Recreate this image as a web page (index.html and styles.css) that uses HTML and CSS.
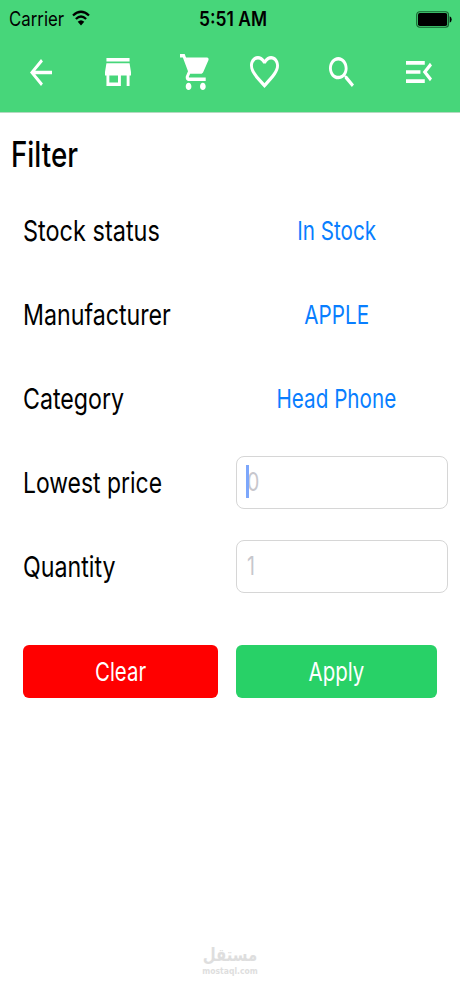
FILE: index.html
```html
<!DOCTYPE html>
<html lang="en">
<head>
<meta charset="utf-8">
<meta name="viewport" content="width=device-width">
<title>Filter</title>
<link rel="stylesheet" href="styles.css">
</head>
<body>
<header class="header">
  <div class="status">
    <div class="carrier"><span class="carrier-name">Carrier</span>
      <svg class="wifi" viewBox="0 0 18 16" preserveAspectRatio="none"><path d="M1 5.5Q9-2.1 17 5.5M3.9 9Q9 4.1 14.1 9" fill="none" stroke="#000" stroke-width="2.3"/><path d="M5.7 11.7Q9 8.6 12.3 11.7L9 15.6z"/></svg>
    </div>
    <span class="time">5:51 AM</span>
    <svg class="battery" viewBox="0 0 36 17"><rect x=".7" y=".7" width="31.8" height="15.6" rx="3" fill="none" stroke="#17602f" stroke-width="1.1"/><rect x="2" y="2" width="29.2" height="13" rx="1.8"/><path d="M33.7 5.3q2 .8 2 3.2t-2 3.2z"/></svg>
  </div>
  <nav class="nav">
    <div class="group group-left">
      <a class="cell"><svg class="i-back" viewBox="4 4 16 16" preserveAspectRatio="none"><path d="M20 11H7.83l5.59-5.59L12 4l-8 8 8 8 1.41-1.41L7.83 13H20v-2z"/></svg></a>
      <a class="cell"><svg class="i-store" viewBox="3 4 18 16" preserveAspectRatio="none"><path d="M20 4H4v2h16V4zm1 10v-2l-1-5H4l-1 5v2h1v6h10v-6h4v6h2v-6h1zm-9 4H6v-4h6v4z"/></svg></a>
      <a class="cell"><svg class="i-cart" viewBox="1 2 21 20" preserveAspectRatio="none"><path d="M7 18c-1.1 0-1.99.9-1.99 2S5.900 22 7 22s2-.9 2-2-.9-2-2-2zM1 2v2h2l3.600 7.590-1.350 2.450c-.16.28-.25.61-.25.96 0 1.100.9 2 2 2h12v-2H7.420c-.14 0-.25-.11-.25-.25l.03-.12.9-1.630h7.450c.75 0 1.410-.41 1.750-1.030l3.580-6.490c.08-.14.12-.31.12-.48 0-.55-.45-1-1-1H5.210l-.94-2H1zm16 16c-1.100 0-1.990.9-1.990 2s.89 2 1.990 2 2-.9 2-2-.9-2-2-2z"/></svg></a>
    </div>
    <div class="group group-right">
      <a class="cell"><svg class="i-heart" viewBox="2 3 20 18.35" preserveAspectRatio="none"><path d="M16.5 3c-1.740 0-3.410.81-4.500 2.090C10.910 3.810 9.240 3 7.500 3 4.420 3 2 5.420 2 8.500c0 3.780 3.400 6.860 8.550 11.540L12 21.350l1.450-1.320C18.600 15.360 22 12.280 22 8.500 22 5.420 19.580 3 16.500 3zm-4.400 15.550l-.1.1-.1-.1C7.140 14.240 4 11.390 4 8.500 4 6.500 5.500 5 7.500 5c1.540 0 3.040.99 3.570 2.360h1.870C13.460 5.990 14.960 5 16.500 5c2 0 3.500 1.500 3.500 3.500 0 2.890-3.140 5.740-7.900 10.050z"/></svg></a>
      <a class="cell"><svg class="i-search" viewBox="3 3 17.49 17.49" preserveAspectRatio="none"><path d="M15.500 14h-.79l-.28-.27C15.410 12.590 16 11.110 16 9.500 16 5.910 13.090 3 9.500 3S3 5.910 3 9.500 5.910 16 9.500 16c1.610 0 3.090-.59 4.230-1.570l.27.28v.79l5 4.990L20.490 19l-4.990-5zm-6 0C7.010 14 5 11.990 5 9.500S7.010 5 9.500 5 14 7.010 14 9.500 11.990 14 9.500 14z"/></svg></a>
      <a class="cell"><svg class="i-menu" viewBox="3 6 18 12" preserveAspectRatio="none"><path d="M3 18h13v-2H3v2zm0-5h10v-2H3v2zm0-7v2h13V6H3zm18 9.590L17.420 12 21 8.410 19.590 7l-5 5 5 5L21 15.590z"/></svg></a>
    </div>
  </nav>
</header>
<main class="main">
  <h1 class="title"><span>Filter</span></h1>
  <div class="row"><span class="label label-wide">Stock status</span><a class="choice"><span>In Stock</span></a></div>
  <div class="row"><span class="label">Manufacturer</span><a class="choice"><span>APPLE</span></a></div>
  <div class="row"><span class="label">Category</span><a class="choice"><span>Head Phone</span></a></div>
  <div class="row"><span class="label label-narrow">Lowest price</span><div class="field"><span>0</span><i class="caret"></i></div></div>
  <div class="row"><span class="label">Quantity</span><div class="field"><span>1</span></div></div>
  <div class="actions"><a class="button clear"><span>Clear</span></a><a class="button apply"><span>Apply</span></a></div>
</main>
<footer class="mark"><div class="mark-name" lang="ar">مستقل</div><div class="mark-site">mostaql.com</div></footer>
</body>
</html>
```
FILE: styles.css
```css
* { box-sizing: border-box; }
body {
  margin: 0;
  width: 460px;
  height: 996px;
  display: flex;
  flex-direction: column;
  background: #fff;
  color: #000;
  font-family: Inter, "Liberation Sans", sans-serif;
  overflow: hidden;
}
svg { display: block; flex: none; }
span { white-space: nowrap; }
.header { height: 113px; background: #47d67a; border-bottom: 1px solid #b5d9c1; }
.status {
  height: 37px;
  padding: 1px 8px 0 9px;
  display: grid;
  grid-template-columns: 1fr auto 1fr;
  align-items: center;
  font-size: 20px;
  line-height: 36px;
}
.carrier { display: flex; align-items: center; }
.carrier-name { width: 63px; transform: scaleX(.84); transform-origin: left; }
.wifi { width: 18px; height: 16px; margin-top: -2px; }
.time { font-weight: 600; transform: scaleX(.87); margin-left: 5px; }
.battery { width: 36px; height: 17px; justify-self: end; }
.nav { display: flex; height: 70px; padding-left: 2px; }
.group { display: flex; }
.group-right { margin-left: -7px; }
.cell { width: 77px; display: flex; align-items: center; justify-content: center; }
.nav svg { fill: #fff; }
.i-back { width: 22px; height: 27px; }
.i-store { width: 26px; height: 28px; }
.i-cart { width: 30px; height: 36px; }
.i-heart { width: 29px; height: 32px; }
.i-search { width: 25px; height: 30px; }
.i-menu { width: 26px; height: 22px; }
.main { display: flex; flex-direction: column; }
.title { margin: 0; height: 75px; padding: 16px 0 0 11px; font-size: 35px; font-weight: 550; line-height: 50px; }
.title span { display: inline-block; transform: scaleX(.793); transform-origin: left; }
.row {
  height: 84px;
  padding: 0 12px 0 23px;
  display: grid;
  grid-template-columns: 213px 212px;
  align-items: center;
}
.label { font-size: 29px; transform: scaleX(.8); transform-origin: left; width: 213px; }
.label-wide { transform: scaleX(.81); }
.label-narrow { transform: scaleX(.79); }
.choice { text-align: center; font-size: 26px; color: #087eff; padding-right: 11px; }
.choice span { display: inline-block; transform: scaleX(.795); }
.field {
  height: 53px;
  padding-left: 10px;
  border: 1px solid #d6d6d6;
  border-radius: 8px;
  display: flex;
  align-items: center;
  position: relative;
  color: #c7c7cd;
  font-size: 25px;
}
.field span { transform: scaleX(.78); transform-origin: left; }
.caret { position: absolute; left: 9px; top: 8px; width: 3px; height: 33px; background: #7da7fb; }
.actions { display: flex; gap: 18px; padding: 37px 0 0 23px; }
.button {
  height: 53px;
  border-radius: 6px;
  display: flex;
  align-items: center;
  justify-content: center;
  color: #fff;
  font-size: 26px;
}
.button span { transform: scaleX(.785); }
.clear { width: 195px; background: #f00; }
.apply { width: 201px; background: #28d167; }
.mark { margin-top: auto; height: 52px; text-align: center; color: #dedede; }
.mark-name { font: bold 18px/22px "DejaVu Sans", sans-serif; transform: scaleX(.83); }
.mark-site { font: bold 8.5px/10px "DejaVu Sans", sans-serif; transform: scaleX(.9); }
```
